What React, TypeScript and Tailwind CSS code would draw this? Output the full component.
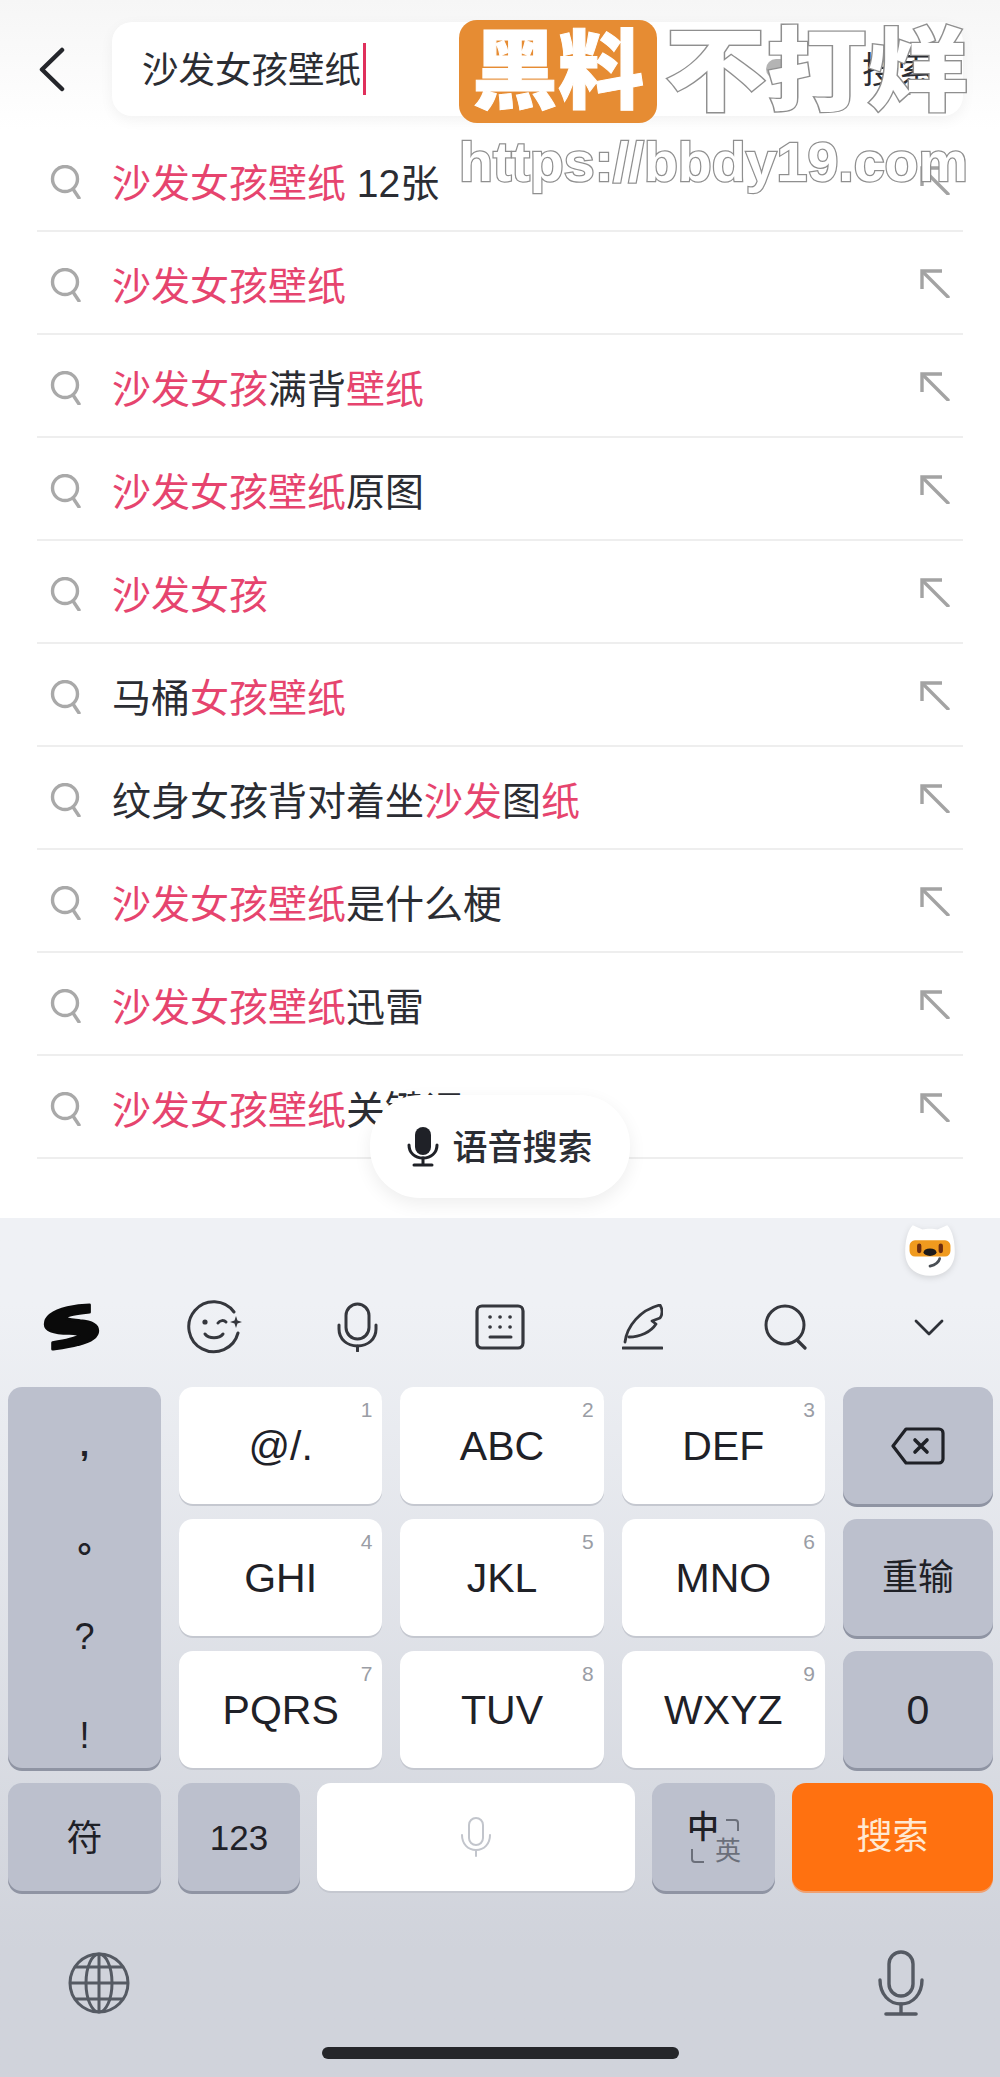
const cjk = "font-['Liberation_Sans','Noto_Sans_CJK_SC',sans-serif]";

type Seg = [string, boolean?];

const rows: Seg[][] = [
  [["沙发女孩壁纸", true], [" 12张"]],
  [["沙发女孩壁纸", true]],
  [["沙发女孩", true], ["满背"], ["壁纸", true]],
  [["沙发女孩壁纸", true], ["原图"]],
  [["沙发女孩", true]],
  [["马桶"], ["女孩壁纸", true]],
  [["纹身女孩背对着坐"], ["沙发", true], ["图"], ["纸", true]],
  [["沙发女孩壁纸", true], ["是什么梗"]],
  [["沙发女孩壁纸", true], ["迅雷"]],
  [["沙发女孩壁纸", true], ["关键词"]],
];

const letterKeys = [
  ["@/.", "1"],
  ["ABC", "2"],
  ["DEF", "3"],
  ["GHI", "4"],
  ["JKL", "5"],
  ["MNO", "6"],
  ["PQRS", "7"],
  ["TUV", "8"],
  ["WXYZ", "9"],
];

function SearchIcon() {
  return (
    <svg width="31" height="34" viewBox="0 0 31 34" fill="none" stroke="#a9a9a9" strokeWidth="3.4" className="shrink-0 mt-[4px]">
      <circle cx="15" cy="14" r="12.5" />
      <path d="M23 24l6 9" strokeLinecap="round" />
    </svg>
  );
}

function FillArrow() {
  return (
    <svg width="30" height="29" viewBox="0 0 30 29" fill="none" stroke="#a3a3a3" strokeWidth="3.4" className="shrink-0 mt-[2px]">
      <path d="M2 20V2h20" />
      <path d="M3 3l25 25" strokeLinecap="round" />
    </svg>
  );
}

function SogouLogo() {
  return (
    <svg width="57" height="48" viewBox="-2 -2 61 52" fill="#0a0a0a" stroke="#0a0a0a" strokeWidth="3" strokeLinejoin="round">
      <path d="M48 0L48 8C38 9 26 10 23 13C22 16 30 16 38 17C50 18 57 22 57 28C57 35 48 40 36 43C26 46 16 47 8 48L8 41C20 39 32 37 36 34C38 32 33 31 26 31C14 31 0 29 0 21C0 12 12 6 24 3C32 1 40 0 48 0Z" />
    </svg>
  );
}

function EmojiIcon() {
  return (
    <svg width="55" height="54" viewBox="0 0 55 54" fill="none" stroke="#35373d" strokeWidth="3" strokeLinecap="round">
      <path d="M47 12A25 25 0 1 0 51 33" />
      <circle cx="18" cy="22" r="2.6" fill="#35373d" stroke="none" />
      <path d="M31 23c2-3 6-3 8-1" />
      <path d="M18 34c4 5 14 5 18 0" />
      <path d="M49 16l1.5 4.5 4.5 1.5-4.5 1.5-1.5 4.5-1.5-4.5-4.5-1.5 4.5-1.5z" fill="#35373d" stroke="none" />
    </svg>
  );
}

function OutlineMic() {
  return (
    <svg width="41" height="50" viewBox="0 0 41 50" fill="none" stroke="#35373d" strokeWidth="3" strokeLinecap="round">
      <rect x="9" y="2" width="23" height="35" rx="11.5" />
      <path d="M2 23v4c0 10 8 17 18.5 17s18.5-7 18.5-17v-4" />
      <path d="M20.5 44v5" />
    </svg>
  );
}

function KeyboardIcon() {
  return (
    <svg width="50" height="46" viewBox="0 0 50 46" fill="none" stroke="#35373d" strokeWidth="3.2" strokeLinecap="round">
      <rect x="2" y="2" width="46" height="42" rx="5" />
      <path d="M15 13h.1M25 13h.1M35 13h.1M15 23h.1M25 23h.1M35 23h.1" strokeWidth="3.6" />
      <path d="M15 33h21" strokeWidth="3" />
    </svg>
  );
}

function FeatherIcon() {
  return (
    <svg width="41" height="46" viewBox="0 0 41 46" fill="none" stroke="#35373d" strokeWidth="2.8" strokeLinecap="round" strokeLinejoin="round">
      <path d="M3 38C5 22 18 6 38 1C41 6 40 11 38 14L30 17L34 20C29 28 18 33 7 33" />
      <path d="M1 44H40" strokeWidth="3" />
    </svg>
  );
}

function LensIcon() {
  return (
    <svg width="43" height="46" viewBox="0 0 43 46" fill="none" stroke="#35373d" strokeWidth="3" strokeLinecap="round">
      <circle cx="21" cy="21" r="19" />
      <path d="M34 37l7 7" strokeWidth="3.2" />
    </svg>
  );
}

function Fox() {
  return (
    <svg width="52" height="56" viewBox="0 0 48 52" className="drop-shadow-[0_2px_3px_rgba(0,0,0,0.12)]">
      <path d="M24 50C10 50 1 41 1 28C1 18 3 8 8 3L17 7C21 6 27 6 31 7L40 3C45 8 47 18 47 28C47 41 38 50 24 50Z" fill="#ffffff" />
      <rect x="5" y="17" width="38" height="15" rx="5" fill="#f09a1e" />
      <rect x="12" y="20" width="4" height="9" rx="2" fill="#6b2c10" />
      <rect x="32" y="20" width="4" height="9" rx="2" fill="#6b2c10" />
      <ellipse cx="24" cy="28" rx="6" ry="3.5" fill="#1d1a1a" />
      <path d="M33 34c-1 4-5 6-9 7" fill="none" stroke="#4a4f55" strokeWidth="2.5" strokeLinecap="round" />
    </svg>
  );
}

function DeleteIcon() {
  return (
    <svg width="54" height="38" viewBox="0 0 54 38" fill="none" stroke="#1f2127" strokeWidth="3.2" strokeLinejoin="round" strokeLinecap="round">
      <path d="M15 2H48a4 4 0 0 1 4 4V32a4 4 0 0 1-4 4H15L2 19Z" />
      <path d="M24 13l12 12M36 13L24 25" strokeWidth="3.6" />
    </svg>
  );
}

function Globe() {
  return (
    <svg width="62" height="62" viewBox="0 0 62 62" fill="none" stroke="#555a63" strokeWidth="3">
      <circle cx="31" cy="31" r="29" />
      <ellipse cx="31" cy="31" rx="13" ry="29" />
      <path d="M31 2v58M2 31h58M7 15h48M7 47h48" />
    </svg>
  );
}

function BottomMic() {
  return (
    <svg width="46" height="66" viewBox="0 0 46 66" fill="none" stroke="#555a63" strokeWidth="3.4" strokeLinecap="round">
      <rect x="11" y="2" width="24" height="44" rx="12" />
      <path d="M2 30c0 14 9 24 21 24s21-10 21-24" />
      <path d="M23 54v9" />
      <path d="M8 64h30" strokeWidth="3.6" />
    </svg>
  );
}

function SpaceMic() {
  return (
    <svg width="32" height="40" viewBox="0 0 32 40" fill="none" stroke="#c2c5cc" strokeWidth="2" strokeLinecap="round">
      <rect x="9" y="1" width="14" height="27" rx="7" />
      <path d="M2 18c0 9 6 15 14 15s14-6 14-15" />
      <path d="M16 33v6" />
    </svg>
  );
}

function PillMic() {
  return (
    <svg width="32" height="40" viewBox="0 0 32 40" fill="none" stroke="#1f2127" strokeWidth="3" strokeLinecap="round">
      <rect x="8" y="0" width="16" height="28" rx="8" fill="#1f2127" stroke="none" />
      <path d="M2 18c0 8 6 13 14 13s14-5 14-13" />
      <path d="M16 31v7M7 38h18" />
    </svg>
  );
}

function FnKey({ children, className = "" }: { children?: React.ReactNode; className?: string }) {
  return (
    <div className={"flex items-center justify-center rounded-[14px] bg-[#bcc0cd] shadow-[0_3px_0_#8f94a3] text-[#1f2127] " + className}>
      {children}
    </div>
  );
}

function LetterKey({ label, num }: { label: string; num: string }) {
  return (
    <div className="relative rounded-[14px] bg-white shadow-[0_2px_0_#c5c8d0] flex items-center justify-center pt-[3px] text-[41px] text-[#1f2127]">
      {label}
      <span className="absolute right-[10px] top-[12px] text-[21px] leading-none text-[#9a9da5]">{num}</span>
    </div>
  );
}

export default function App() {
  return (
    <div className={"relative w-full h-[2077px] overflow-hidden bg-white " + cjk}>
      {/* search header */}
      <div className="h-[129px] pt-[22px] pl-[38px] pr-[37px] flex items-start gap-[48px] bg-gradient-to-b from-[#f6f6f6] to-white">
        <svg width="27" height="45" viewBox="0 0 27 45" fill="none" stroke="#24262b" strokeWidth="4.5" strokeLinecap="round" strokeLinejoin="round" className="mt-[25px] shrink-0">
          <path d="M24 3L4 22.5L24 42" />
        </svg>
        <div className="flex-1 h-[94px] rounded-[20px] bg-white shadow-[0_4px_14px_rgba(0,0,0,0.05)] flex items-center pl-[30px] pr-[29px] -ml-[1px]">
          <span className="text-[36.5px] leading-none pt-[4px] text-[#2b2d33]">沙发女孩壁纸</span>
          <span className="ml-[2px] w-[3px] h-[52px] bg-[#e0305c]" />
          <span className="ml-auto mr-[70px] w-[26px] h-[20px] rounded-full bg-[#b4b4b4]" />
          <span className="text-[36px] leading-none pt-[4px] text-[#2b2d33]">搜索</span>
        </div>
      </div>

      {/* suggestions */}
      <div className="mx-[37px]">
        {rows.map((segs, i) => (
          <div key={i} className="h-[103px] border-b-2 border-[#eeeeee] pl-[13px] pr-[13px] flex items-center gap-[31px]">
            <SearchIcon />
            <div className="flex-1 text-[39px] leading-none pt-[7px] whitespace-pre text-[#2b2d33]">
              {segs.map(([text, hl], j) => (
                <span key={j} className={hl ? "text-[#e6446e]" : ""}>{text}</span>
              ))}
            </div>
            <FillArrow />
          </div>
        ))}
      </div>
      <div className="h-[59px]" />

      {/* voice search pill */}
      <div className="absolute left-[370px] top-[1095px] w-[260px] h-[103px] rounded-[50px] bg-white shadow-[0_6px_18px_rgba(0,0,0,0.07)] flex items-center justify-center gap-[13px]">
        <PillMic />
        <span className="text-[35px] leading-none pt-[2px] font-medium text-[#2b2d33]">语音搜索</span>
      </div>

      {/* keyboard */}
      <div className="h-[859px] bg-gradient-to-b from-[#eff1f5] from-10% to-[#d0d3db] to-85%">
        <div className="pt-[4px] h-[59px] flex justify-end pr-[44px]">
          <Fox />
        </div>
        <div className="mt-[23px] h-[50px] grid grid-cols-7 items-center justify-items-center">
          <SogouLogo />
          <EmojiIcon />
          <OutlineMic />
          <KeyboardIcon />
          <FeatherIcon />
          <LensIcon />
          <svg width="30" height="17" viewBox="0 0 30 17" fill="none" stroke="#2e3138" strokeWidth="2.8" strokeLinecap="round" strokeLinejoin="round">
            <path d="M2 2l13 13L28 2" />
          </svg>
        </div>

        <div className="mt-[37px] pl-[8px] pr-[7px] grid grid-cols-[153px_1fr_1fr_1fr_150px] grid-rows-[117px_117px_117px] gap-x-[18px] gap-y-[15px]">
          <div className="row-span-3 flex flex-col items-center rounded-[14px] bg-[#bcc0cd] shadow-[0_3px_0_#8f94a3] text-[#1f2127] text-[36px] leading-[60px] pt-[35px]">
            <span className="h-[60px] font-bold text-[34px] -translate-y-[8px]">,</span>
            <span className="h-[60px] mt-[36px] translate-x-[11px] -translate-y-[8px] font-bold">。</span>
            <span className="h-[60px] mt-[29px]">?</span>
            <span className="h-[60px] mt-[39px]">!</span>
          </div>
          {letterKeys.slice(0, 3).map(([label, num]) => (
            <LetterKey key={num} label={label} num={num} />
          ))}
          <FnKey><DeleteIcon /></FnKey>
          {letterKeys.slice(3, 6).map(([label, num]) => (
            <LetterKey key={num} label={label} num={num} />
          ))}
          <FnKey className="text-[36px]">重输</FnKey>
          {letterKeys.slice(6, 9).map(([label, num]) => (
            <LetterKey key={num} label={label} num={num} />
          ))}
          <FnKey className="text-[41px] pt-[3px]">0</FnKey>
        </div>

        <div className="mt-[15px] pl-[8px] pr-[7px] h-[108px] flex gap-[17px]">
          <FnKey className="w-[153px] text-[36px] pt-[3px]">符</FnKey>
          <FnKey className="w-[122px] text-[35px] pt-[3px]">123</FnKey>
          <div className="w-[318px] rounded-[14px] bg-white shadow-[0_2px_0_#c5c8d0] flex items-center justify-center">
            <SpaceMic />
          </div>
          <FnKey className="relative w-[123px]">
            <span className="absolute left-[35px] top-[28px] text-[32px] leading-none font-medium">中</span>
            <span className="absolute left-[63px] top-[55px] text-[26px] leading-none text-[#6b6f7a]">英</span>
            <svg width="50" height="44" viewBox="0 0 50 44" fill="none" stroke="#6b6f7a" strokeWidth="2" className="absolute left-[38px] top-[36px]">
              <path d="M36 1h9a3 3 0 0 1 3 3v8" />
              <path d="M2 30v10a3 3 0 0 0 3 3h9" />
            </svg>
          </FnKey>
          <div className="flex-1 rounded-[14px] bg-[#ff7110] shadow-[0_2px_0_#f0a070] flex items-center justify-center text-[36px] text-[#ffe9d2]">
            搜索
          </div>
        </div>

        <div className="mt-[59px] h-[66px] pl-[68px] pr-[76px] flex items-center justify-between">
          <Globe />
          <BottomMic />
        </div>

        <div className="mt-[31px] mx-auto w-[357px] h-[12px] rounded-full bg-[#25262a]" />
      </div>

      {/* watermark */}
      <div className="absolute left-[459px] top-[20px] w-[511px]">
        <div className="flex items-center gap-[8px]">
          <div className="w-[198px] h-[103px] rounded-[18px] bg-[#e68c33] flex items-center justify-center text-[86px] leading-none font-black text-white [-webkit-text-stroke:1px_#ffffff]">
            黑料
          </div>
          <div className="text-[101px] leading-none font-black text-white whitespace-nowrap scale-y-[0.9] [-webkit-text-stroke:3px_#8f8f8f] [paint-order:stroke_fill]">
            不打烊
          </div>
        </div>
        <div className="mt-[8px] text-[55.5px] leading-[62px] font-bold text-white whitespace-nowrap [-webkit-text-stroke:2.5px_#8f8f8f] [paint-order:stroke_fill]">
          https://bbdy19.com
        </div>
      </div>
    </div>
  );
}
